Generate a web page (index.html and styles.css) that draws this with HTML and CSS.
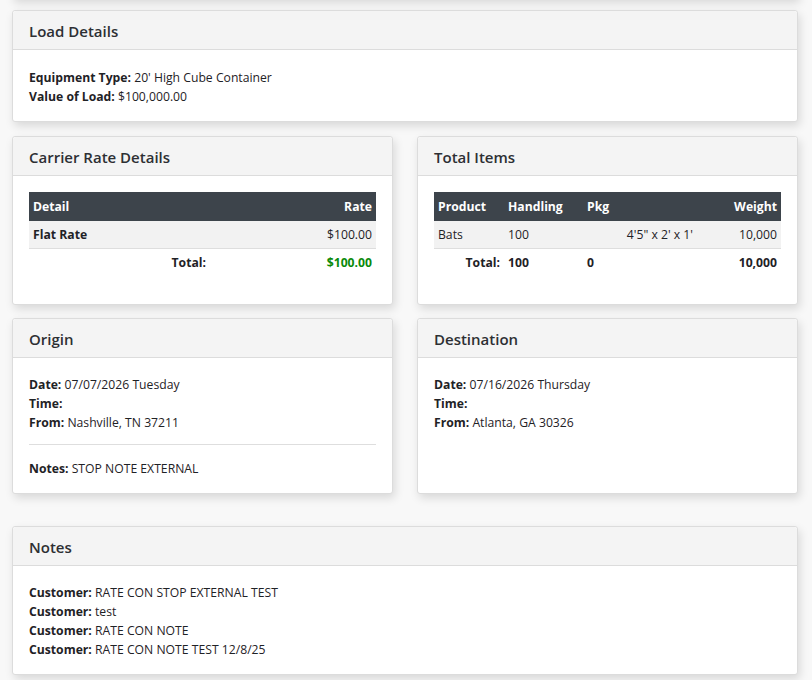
FILE: index.html
```html
<!DOCTYPE html>
<html>
<head>
<meta charset="utf-8">
<link rel="stylesheet" href="styles.css">
</head>
<body>
<div class="page">
  <div class="card prev"></div>

  <div class="card">
    <div class="card-header">Load Details</div>
    <div class="card-body load-body">
      <div><b>Equipment Type:</b> 20' High Cube Container</div>
      <div><b>Value of Load:</b> $100,000.00</div>
    </div>
  </div>

  <div class="row first">
    <div class="card">
      <div class="card-header">Carrier Rate Details</div>
      <div class="card-body table-body">
        <table class="tbl rate">
          <thead>
            <tr><th class="c1">Detail</th><th class="r">Rate</th></tr>
          </thead>
          <tbody>
            <tr class="striped"><td><b>Flat Rate</b></td><td class="r">$100.00</td></tr>
            <tr class="total"><td class="r"><b>Total:</b></td><td class="r green"><b>$100.00</b></td></tr>
          </tbody>
        </table>
      </div>
    </div>

    <div class="card">
      <div class="card-header">Total Items</div>
      <div class="card-body table-body">
        <table class="tbl items">
          <thead>
            <tr>
              <th class="w-prod">Product</th>
              <th class="w-hand">Handling</th>
              <th class="w-pkg">Pkg</th>
              <th></th>
              <th class="r w-wt">Weight</th>
            </tr>
          </thead>
          <tbody>
            <tr class="striped">
              <td>Bats</td><td>100</td><td></td><td class="r">4'5" x 2' x 1'</td><td class="r">10,000</td>
            </tr>
            <tr class="total">
              <td class="r"><b>Total:</b></td><td><b>100</b></td><td><b>0</b></td><td></td><td class="r"><b>10,000</b></td>
            </tr>
          </tbody>
        </table>
      </div>
    </div>
  </div>

  <div class="row">
    <div class="card">
      <div class="card-header">Origin</div>
      <div class="card-body">
        <div><b>Date:</b> 07/07/2026 Tuesday</div>
        <div><b>Time:</b></div>
        <div><b>From:</b> Nashville, TN 37211</div>
        <hr class="sep">
        <div><b>Notes:</b> STOP NOTE EXTERNAL</div>
      </div>
    </div>
    <div class="card">
      <div class="card-header">Destination</div>
      <div class="card-body">
        <div><b>Date:</b> 07/16/2026 Thursday</div>
        <div><b>Time:</b></div>
        <div><b>From:</b> Atlanta, GA 30326</div>
      </div>
    </div>
  </div>

  <div class="card notes">
    <div class="card-header">Notes</div>
    <div class="card-body">
      <div><b>Customer:</b> RATE CON STOP EXTERNAL TEST</div>
      <div><b>Customer:</b> test</div>
      <div><b>Customer:</b> RATE CON NOTE</div>
      <div><b>Customer:</b> RATE CON NOTE TEST 12/8/25</div>
    </div>
  </div>
</div>
</body>
</html>
```

FILE: styles.css
```css
html, body {
  margin: 0;
  padding: 0;
  background: #f8f8f8;
  overflow: hidden;
}
body {
  font-family: "Open Sans", "Noto Sans", sans-serif;
  font-size: 12.2px;
  line-height: 19px;
  color: #1f2226;
}
.page {
  padding: 0 14px 20px 12px;
  display: flex;
  flex-direction: column;
}
.card {
  background: #fff;
  border: 1px solid #dcdcdc;
  border-radius: 3px;
  box-shadow: 2px 4px 10px rgba(0, 0, 0, 0.13);
  margin-bottom: 14px;
}
.card.prev {
  height: 30px;
  margin-top: -33px;
  margin-bottom: 0;
  border-radius: 0;
  background: #f8f8f8;
}
.page > .prev + .card {
  margin-top: 11px;
}
.card-header {
  background: #f4f4f4;
  border-bottom: 1px solid #dcdcdc;
  font-size: 15px;
  font-weight: 600;
  line-height: 20px;
  padding: 10px 16px 8px 16px;
  color: #2d2f33;
  border-radius: 3px 3px 0 0;
}
.card-body {
  padding: 17px 16px 15px 16px;
}
.load-body {
  padding-top: 18px;
}
.row {
  display: grid;
  grid-template-columns: 1fr 1fr;
  column-gap: 24px;
}
.row .card {
  margin-bottom: 14px;
}
.row.first .card {
  margin-bottom: 13px;
}
.table-body {
  padding-top: 16px;
  padding-bottom: 28px;
}
.tbl {
  width: 100%;
  border-collapse: collapse;
}
.tbl th {
  background: #3d444b;
  color: #fff;
  font-weight: bold;
  text-align: left;
  padding: 5px 4px;
  line-height: 19px;
}
.tbl td {
  padding: 4px 4px;
  line-height: 19px;
}
.tbl tr.striped td {
  background: #f2f2f2;
  border-bottom: 1px solid #dedede;
}
.tbl .r {
  text-align: right;
}
.green {
  color: #0a8a0a;
}
.rate .c1 {
  width: 173px;
}
.items .w-prod { width: 62px; }
.items .w-hand { width: 71px; }
.items .w-pkg { width: 30px; }
.items .w-wt { width: 76px; }
.sep {
  border: 0;
  border-top: 1px solid #dedede;
  margin: 12px 0 14px 0;
}
.notes {
  margin-top: 18px;
}
```
